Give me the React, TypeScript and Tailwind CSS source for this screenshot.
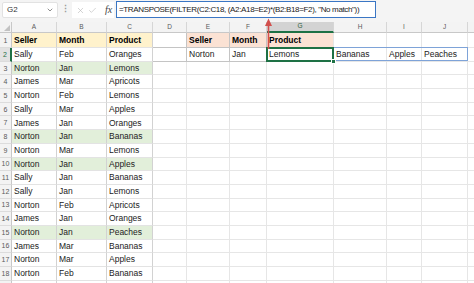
import React from "react";
import { X, Check, ChevronDown } from "lucide-react";

const W = [
  "w-[45px]",
  "w-[50px]",
  "w-[46px]",
  "w-[34px]",
  "w-[43px]",
  "w-[37px]",
  "w-[67px]",
  "w-[53px]",
  "w-[35px]",
  "w-[46px]",
  "w-[60px]",
];
const LETTERS = ["A", "B", "C", "D", "E", "F", "G", "H", "I", "J", ""];

const DATA: string[][] = [
  ["Seller", "Month", "Product"],
  ["Sally", "Feb", "Oranges"],
  ["Norton", "Jan", "Lemons"],
  ["James", "Mar", "Apricots"],
  ["Norton", "Feb", "Lemons"],
  ["Sally", "Mar", "Apples"],
  ["James", "Jan", "Oranges"],
  ["Norton", "Jan", "Bananas"],
  ["Norton", "Mar", "Lemons"],
  ["Norton", "Jan", "Apples"],
  ["Sally", "Jan", "Bananas"],
  ["Sally", "Jan", "Lemons"],
  ["Norton", "Feb", "Apricots"],
  ["James", "Jan", "Oranges"],
  ["Norton", "Jan", "Peaches"],
  ["James", "Mar", "Bananas"],
  ["Norton", "Mar", "Apples"],
  ["Norton", "Feb", "Bananas"],
];
const GREEN_ROWS = [3, 8, 10, 15];

function cellValue(r: number, c: number): string {
  if (c < 3 && r <= 18) return DATA[r - 1][c];
  if (r === 1) {
    if (c === 4) return "Seller";
    if (c === 5) return "Month";
    if (c === 6) return "Product";
  }
  if (r === 2) {
    const m: Record<number, string> = { 4: "Norton", 5: "Jan", 6: "Lemons", 7: "Bananas", 8: "Apples", 9: "Peaches" };
    return m[c] ?? "";
  }
  return "";
}

function cellBg(r: number, c: number): string {
  if (r === 1 && c < 3) return "bg-[#fff2cc]";
  if (r === 1 && c >= 4 && c <= 6) return "bg-[#fbe2d4]";
  if (c < 3 && GREEN_ROWS.includes(r)) return "bg-[#e2efda]";
  return "bg-white";
}

function cellBorder(r: number, c: number): string {
  if (r <= 2 && (c === 3 || c === 4 || c === 5)) return "border-r border-b border-r-[#c4c4c4] border-b-[#c4c4c4]";
  if (c < 3) return "border-r border-b border-r-[#d2d2d2] border-b-[#e3e3e3]";
  return "border-r border-b border-r-[#e6e6e6] border-b-[#e6e6e6]";
}

function Row({ r }: { r: number }) {
  const h = r === 1 ? "h-[15px]" : "h-[13.7px]";
  const active = r === 2;
  return (
    <div className={`flex ${h} shrink-0`}>
      <div
        className={`w-[12px] shrink-0 flex items-center justify-center text-[7px] border-b border-b-[#dcdcdc] ${
          active ? "bg-[#e2e2e2] border-r-2 border-r-[#1e7145] text-[#1e7145]" : "bg-[#f3f3f3] border-r border-r-[#c8c8c8] text-[#5a5a5a]"
        }`}
      >
        {r <= 18 ? r : ""}
      </div>
      {W.map((w, c) => {
        const v = cellValue(r, c);
        const isSel = r === 2 && c === 6;
        return (
          <div
            key={c}
            className={`${w} shrink-0 relative flex items-center pl-[2px] overflow-visible whitespace-nowrap ${cellBg(r, c)} ${cellBorder(
              r,
              c
            )} ${r === 1 ? "font-bold text-black" : "text-[#222]"}`}
          >
            {v}
            {isSel && (
              <>
                <div className="absolute z-10 -left-px -top-px w-[202px] h-[calc(100%+1px)] border border-[#7ea3d8] pointer-events-none" />
                <div className="absolute z-20 -inset-px border-2 border-[#1e7145] pointer-events-none" />
                <div className="absolute z-30 -right-[3px] -bottom-[3px] w-[5px] h-[5px] bg-[#1e7145] border border-white" />
              </>
            )}
          </div>
        );
      })}
    </div>
  );
}

export default function App() {
  const rows = Array.from({ length: 19 }, (_, i) => i + 1);
  return (
    <div
      className="relative w-[474px] h-[283px] overflow-hidden bg-white text-[8.5px] leading-none"
      style={{ fontFamily: '"Liberation Sans", Arial, sans-serif' }}
    >
      {/* Formula bar */}
      <div className="h-[22px] bg-[#f4f4f4] flex items-start pt-[1px] pl-[2px]">
        <div className="w-[56px] h-[16px] mt-[1px] bg-white border border-[#e2e2e2] rounded-[2px] flex items-center pl-[4px] pr-[3px] text-[8px] text-[#333]">
          <span className="flex-1">G2</span>
          <ChevronDown size={8} strokeWidth={2} className="text-[#555]" />
        </div>
        <div className="w-[14px] h-[17px] flex items-center justify-center text-[#9a9a9a] text-[9px] font-bold">⋮</div>
        <div className="w-[42px] h-[16px] mt-[1px] bg-white flex items-center pl-[4px] gap-[3px]">
          <X size={9} strokeWidth={1.5} className="text-[#b4b4b4]" />
          <Check size={9} strokeWidth={1.5} className="text-[#b4b4b4]" />
          <span
            className="ml-[5px] italic text-[10px] text-[#444]"
            style={{ fontFamily: '"Liberation Serif", "Times New Roman", serif' }}
          >
            fx
          </span>
        </div>
        <div className="ml-[2px] w-[260px] h-[17px] bg-white border border-[#3a76c4] flex items-center pl-[2px] text-[8px] tracking-[-0.35px] text-[#222] whitespace-nowrap">
          =TRANSPOSE(FILTER(C2:C18, (A2:A18=E2)*(B2:B18=F2), "No match"))
        </div>
      </div>

      {/* Column headers */}
      <div className="flex h-[11px] text-[6.5px] text-[#5a5a5a]">
        <div className="w-[12px] shrink-0 bg-[#f3f3f3] border-r border-b border-[#c8c8c8] flex items-end justify-end pr-[1px] pb-[1px]">
          <div className="w-0 h-0 border-l-[6px] border-l-transparent border-b-[6px] border-b-[#c2c2c2]" />
        </div>
        {W.map((w, c) => {
          const active = c === 6;
          return (
            <div
              key={c}
              className={`${w} shrink-0 flex items-center justify-center border-r border-r-[#d6d6d6] ${
                active
                  ? "bg-[#d3d3d3] border-b-2 border-b-[#1e7145] text-[#2f5e40]"
                  : "bg-[#f3f3f3] border-b border-b-[#c8c8c8]"
              }`}
            >
              {LETTERS[c]}
            </div>
          );
        })}
      </div>

      {rows.map((r) => (
        <Row key={r} r={r} />
      ))}

      {/* Red arrow annotation */}
      <svg className="absolute z-40 left-[264px] top-[18px]" width="9" height="31" viewBox="0 0 9 31">
        <line x1="4.5" y1="6" x2="4.5" y2="31" stroke="#d2504d" strokeWidth="1.6" />
        <polygon points="4.5,0.5 1,8 8,8" fill="#d2504d" />
      </svg>
    </div>
  );
}
